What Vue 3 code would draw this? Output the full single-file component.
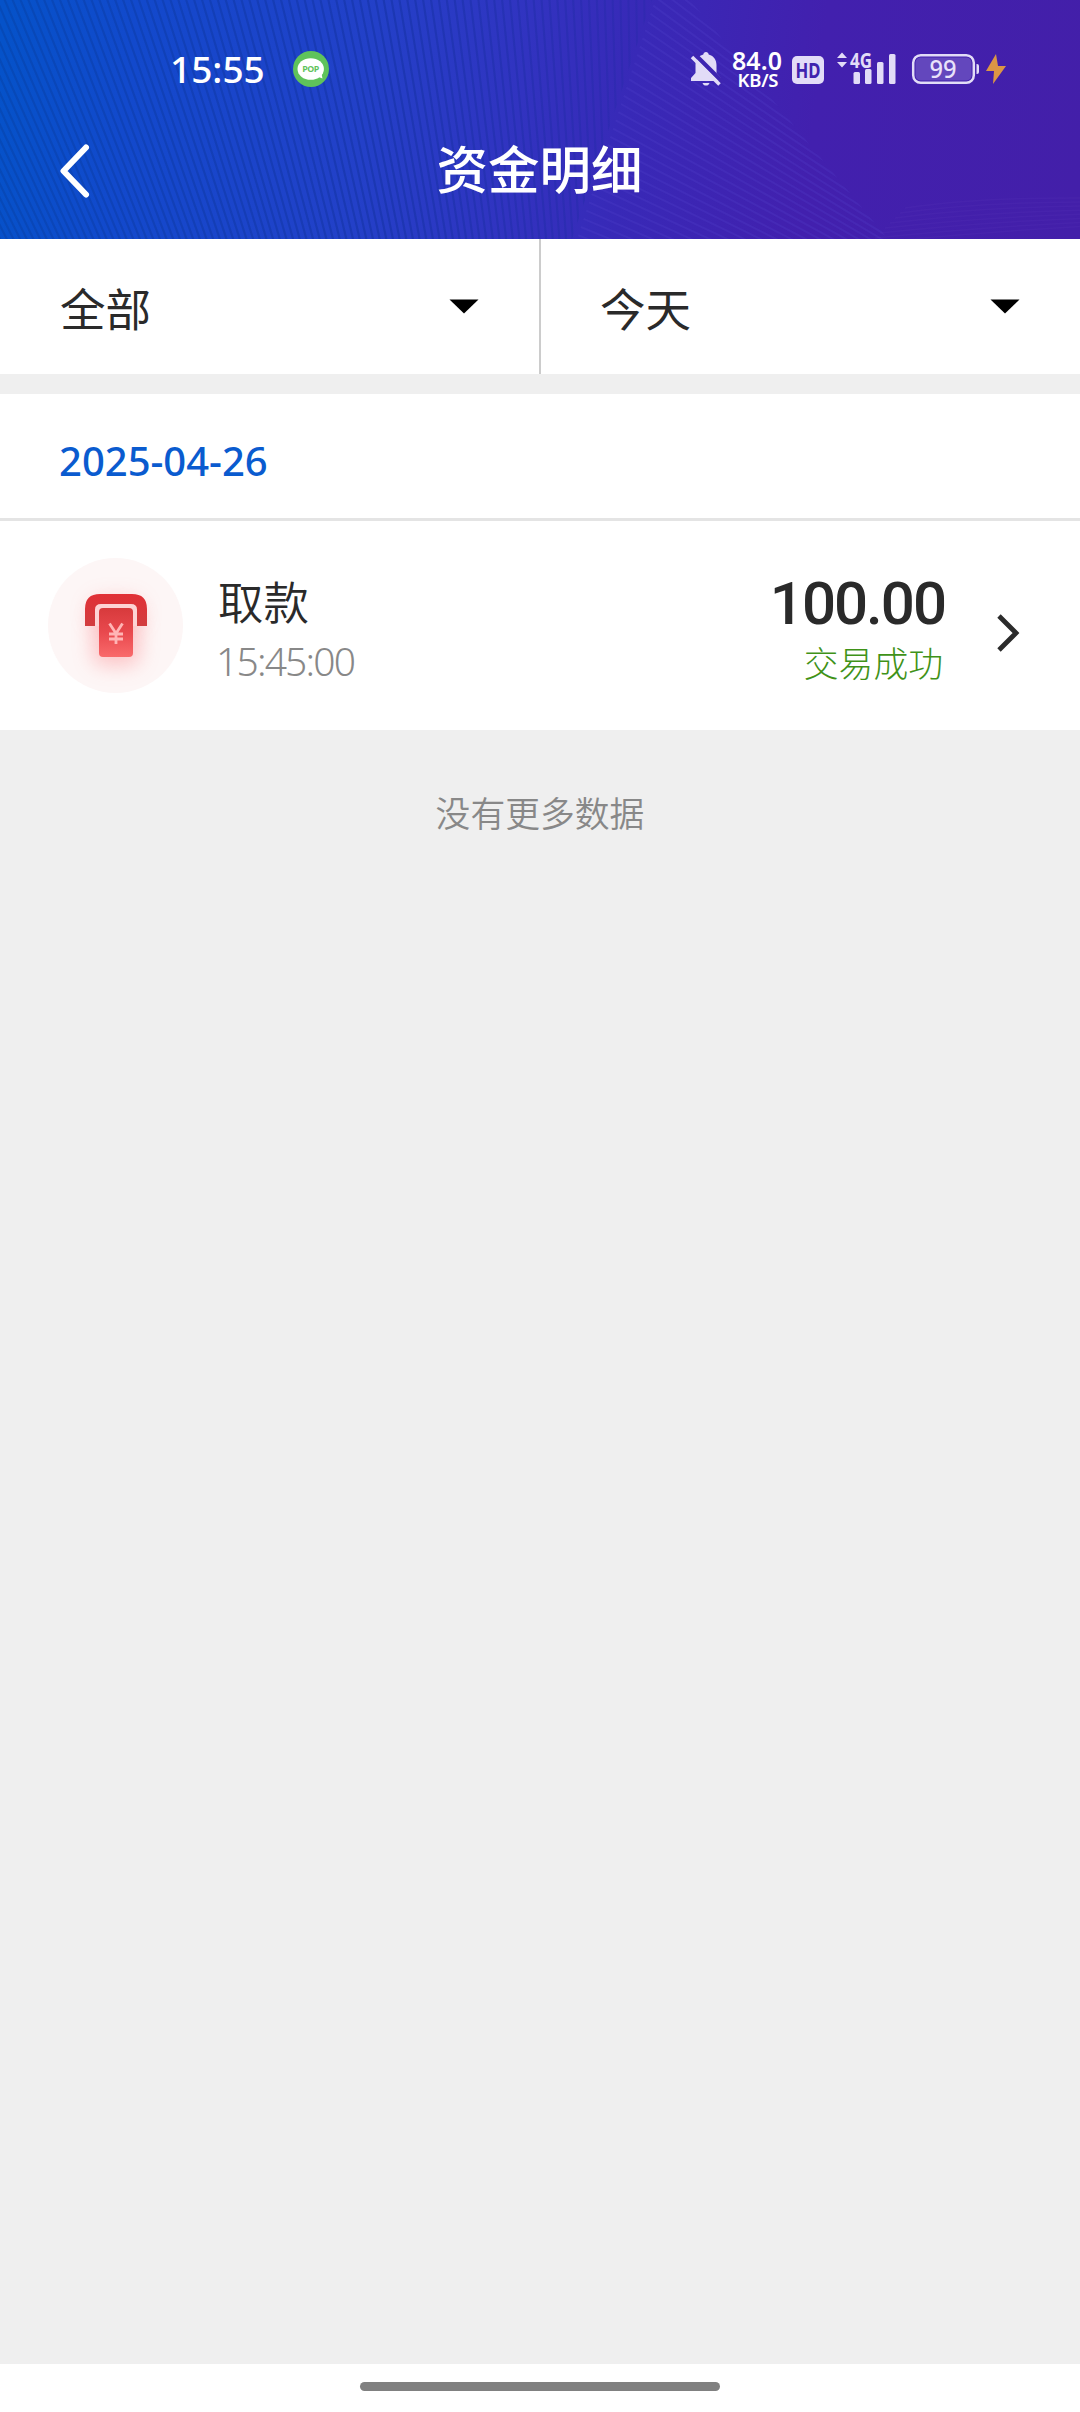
<script setup>
const range = (n) => Array.from({ length: n }, (_, i) => i)

// Steep strands that straighten towards the middle of the header
const strands = range(104).map((i) => {
  const x = -130 + i * 7.9
  const t = Math.min(1, Math.max(0, (x + 130) / 760))
  return { x1: x, x2: x + 120 * (1 - t) + 4 }
})

// Shallow strands fanning out from the fold
const folds = range(44).map((i) => {
  const y = -60 + i * 8.2
  return { x1: 655 - (y / 239) * 78, y1: y, x2: 925, y2: y + 215 - i * 2.1 }
})

const ripples = range(8).map((i) => `M${870 + i * 5} ${243 - i * 5} Q980 ${232 - i * 5} 1090 ${226 - i * 4}`)

const filters = ['全部', '今天']
const record = { name: '取款', time: '15:45:00', amount: '100.00', status: '交易成功' }
</script>

<template>
  <div class="page">
    <header class="header">
      <svg class="backdrop" width="1080" height="239" viewBox="0 0 1080 239">
        <defs>
          <linearGradient id="sky" gradientUnits="userSpaceOnUse" x1="0" y1="60" x2="1080" y2="190">
            <stop offset="0" stop-color="#0552c9" />
            <stop offset=".12" stop-color="#1249cc" />
            <stop offset=".34" stop-color="#2340c8" />
            <stop offset=".48" stop-color="#3133c0" />
            <stop offset=".58" stop-color="#3829b7" />
            <stop offset=".75" stop-color="#4220ae" />
            <stop offset="1" stop-color="#431fa9" />
          </linearGradient>
          <linearGradient id="fade" gradientUnits="userSpaceOnUse" x1="0" y1="0" x2="650" y2="0">
            <stop offset="0" stop-color="#073c9c" stop-opacity=".38" />
            <stop offset=".6" stop-color="#122f9d" stop-opacity=".48" />
            <stop offset="1" stop-color="#2428a8" stop-opacity=".32" />
          </linearGradient>
          <clipPath id="left"><path d="M0 0H652L572 239H0Z" /></clipPath>
          <clipPath id="mid"><path d="M652 0H690L888 239H572Z" /></clipPath>
        </defs>
        <rect width="1080" height="239" fill="url(#sky)" />
        <g clip-path="url(#left)" stroke="url(#fade)" stroke-width="2.2">
          <line v-for="(s, i) in strands" :key="i" :x1="s.x1" y1="-1" :x2="s.x2" y2="240" />
        </g>
        <g clip-path="url(#mid)" stroke="#5a4ad0" stroke-opacity=".2" stroke-width="2">
          <line v-for="(f, i) in folds" :key="i" :x1="f.x1" :y1="f.y1" :x2="f.x2" :y2="f.y2" />
        </g>
        <g fill="none" stroke="#5a35b8" stroke-opacity=".2" stroke-width="1.5">
          <path v-for="(d, i) in ripples" :key="i" :d="d" />
        </g>
      </svg>

      <div class="status">
        <span class="clock">15:55</span>
        <svg class="pop" width="36" height="36" viewBox="0 0 36 36">
          <circle cx="18" cy="18" r="18" fill="#5fc35b" />
          <ellipse cx="17.700" cy="18" rx="13.200" ry="10.800" fill="#fff" />
          <path d="M23 25 L29.500 27.500 L28 20Z" fill="#fff" />
          <text x="17.700" y="21.200" text-anchor="middle" font-size="8.800" font-weight="700" textLength="17" fill="#5fc35b">POP</text>
        </svg>
        <svg class="indicators" width="330" height="68" viewBox="688 35 330 68">
          <g fill="#e2dcf7">
            <path d="M706 52c1.500 0 2.500 1 2.700 2.500C714 56 716.500 60 716.500 65v8l4.500 5v3H691v-3l4.500-5v-8c0-5 2.500-9 7.800-10.500C703.500 53 704.500 52 706 52Z" />
            <path d="M702.500 83h7c-.5 1.700-1.800 2.600-3.500 2.600s-3-.9-3.500-2.600Z" />
            <path d="M694 53.500 L723 82.500" stroke="#3e25b1" stroke-width="4.500" />
            <path d="M692 57 L719.500 84.500" stroke="#e2dcf7" stroke-width="3.500" />
            <rect x="792" y="56" width="32" height="28" rx="5" />
            <path d="M842 52.500 847 58H837ZM842 67.500 847 62H837Z" />
            <rect x="853.500" y="72" width="6.500" height="12" rx="1.500" />
            <rect x="865" y="69" width="6.500" height="15" rx="1.500" />
            <rect x="877" y="62" width="6.500" height="22" rx="1.500" />
            <rect x="889" y="54" width="6.500" height="30" rx="1.500" />
            <path d="M976.500 64h.5a2 2 0 0 1 2 2v6a2 2 0 0 1-2 2h-.5Z" />
          </g>
          <rect x="913.200" y="55.200" width="60.600" height="27.600" rx="7.500" fill="none" stroke="#e2dcf7" stroke-width="2.500" />
          <rect x="915.500" y="57.500" width="56" height="23" rx="5" fill="#6347bd" />
          <path d="M996 54 986 71h8l-1 13 13-18h-8Z" fill="#dc9645" />
          <g class="tiny" text-anchor="middle">
            <text x="757" y="69.500" font-size="25" font-weight="600" textLength="50" fill="#fff">84.0</text>
            <text x="758" y="87" font-size="18.500" font-weight="600" textLength="41" fill="#fff">KB/S</text>
            <text x="808" y="78" font-size="22" font-weight="700" textLength="25" lengthAdjust="spacingAndGlyphs" fill="#3f23ae">HD</text>
            <text x="861" y="67.500" font-size="20.500" font-weight="700" textLength="22" lengthAdjust="spacingAndGlyphs" fill="#e2dcf7">4G</text>
            <text x="943" y="78" font-size="24.500" font-weight="500" textLength="27" lengthAdjust="spacingAndGlyphs" fill="#e8e2fa">99</text>
          </g>
        </svg>
      </div>

      <div class="nav">
        <svg class="back" width="34" height="56" viewBox="0 0 34 56">
          <path d="M28 4.500 5.500 28l22.500 23.500" fill="none" stroke="#fff" stroke-width="6" stroke-linecap="round" stroke-linejoin="round" />
        </svg>
        <h1>资金明细</h1>
      </div>
    </header>

    <div class="filters">
      <div v-for="f in filters" :key="f" class="filter">
        <span>{{ f }}</span>
        <svg width="30" height="15" viewBox="0 0 30 15"><path d="M.5.5h29L15 14.500Z" fill="#000" /></svg>
      </div>
    </div>

    <section class="list">
      <div class="date">2025-04-26</div>
      <div class="row">
        <svg class="badge" width="135" height="135" viewBox="0 0 135 135">
          <defs>
            <linearGradient id="hood" x1="0" y1="0" x2="0" y2="1">
              <stop offset="0" stop-color="#e13036" /><stop offset="1" stop-color="#d23d3f" />
            </linearGradient>
            <linearGradient id="note" x1="0" y1="0" x2="0" y2="1">
              <stop offset="0" stop-color="#d73a3c" /><stop offset=".5" stop-color="#e9494e" /><stop offset="1" stop-color="#f96a6b" />
            </linearGradient>
            <filter id="glow" x="-1" y="-1" width="3" height="3"><feGaussianBlur stdDeviation="10" /></filter>
          </defs>
          <circle cx="67.500" cy="67.500" r="67.500" fill="#fdf6f6" />
          <rect x="44" y="50" width="48" height="58" rx="12" fill="#fa777b" opacity=".38" filter="url(#glow)" />
          <rect x="40" y="38" width="56" height="34" rx="14" fill="#fa777b" opacity=".2" filter="url(#glow)" />
          <path d="M46 68V54q0-9 8-9H82q8 0 8 9V68Z" fill="#fdd3d4" />
          <path d="M37 68V51Q37 36 52 36H84Q99 36 99 51V68H89V51.500Q89 46 83 46H53Q47 46 47 51.500V68Z" fill="url(#hood)" />
          <rect x="51" y="50" width="34" height="49" rx="4" fill="url(#note)" />
          <path d="M61.500 65.500 68 75.500 74.500 65.500M61 76H75M61 81H75M68 75V86" fill="none" stroke="#ffb5b5" stroke-width="2.800" />
        </svg>
        <div class="info">
          <div class="name">{{ record.name }}</div>
          <div class="time">{{ record.time }}</div>
        </div>
        <div class="result">
          <div class="amount">{{ record.amount }}</div>
          <div class="state">{{ record.status }}</div>
        </div>
        <svg class="go" width="26" height="40" viewBox="0 0 26 40">
          <path d="M3 3 20 20 3 37" fill="none" stroke="#2b2b2b" stroke-width="4.800" />
        </svg>
      </div>
    </section>

    <p class="empty">没有更多数据</p>
    <footer class="gesture"><i></i></footer>
  </div>
</template>

<style>
body { margin: 0; }
</style>

<style scoped>
.page {
  display: flex;
  flex-direction: column;
  width: 1080px;
  height: 2412px;
  overflow: hidden;
  background: #efefef;
  color: #2a2a2a;
  font-family: "Noto Sans", "Noto Sans CJK SC", sans-serif;
}
.header {
  position: relative;
  flex: none;
  height: 239px;
  color: #fff;
}
.backdrop { position: absolute; inset: 0; }
.status {
  position: relative;
  display: flex;
  align-items: center;
  height: 138px;
}
.clock {
  width: 121px;
  margin-left: 170px;
  font-size: 37px;
  font-weight: 500;
  line-height: 50px;
}
.pop { margin-left: 2px; overflow: visible; }
.pop text { font-family: "Open Sans", sans-serif; }
.indicators { margin-left: 359px; }
.tiny { font-family: "Noto Sans", sans-serif; }
.nav {
  position: relative;
  display: flex;
  align-items: center;
  height: 66px;
}
.back { margin-left: 58px; }
h1 {
  flex: 1;
  margin: -8px 93px 0 0;
  text-align: center;
  font: 500 51.500px/66px "Noto Sans CJK SC", sans-serif;
}
.filters { display: flex; flex: none; height: 135px; background: #fff; }
.filter {
  display: flex;
  flex: none;
  width: 540px;
  align-items: center;
  justify-content: space-between;
  box-sizing: border-box;
  padding: 0 60px;
  font: 400 45.500px/66px "Noto Sans CJK SC", sans-serif;
}
.filter:first-child { border-right: 1px solid #ccc; }
.filter + .filter { border-left: 1px solid #ccc; padding-left: 59px; }
.list { flex: none; margin-top: 20px; background: #fff; }
.date {
  height: 124px;
  padding-left: 59px;
  border-bottom: 3px solid #e4e4e4;
  color: #0a5bcf;
  font-size: 40px;
  font-weight: 500;
  line-height: 134px;
}
.row { display: flex; height: 209px; }
.badge { margin: 37px 0 0 48px; flex: none; }
.info { margin: 46px 0 0 35px; flex: 1; }
.name { font: 350 45.500px/66px "Noto Sans CJK SC", sans-serif; }
.time {
  margin: 3px 0 0 -2px;
  color: #888;
  font-size: 39px;
  font-weight: 300;
  line-height: 50px;
  letter-spacing: -1.800px;
}
.result { margin-top: 50px; text-align: right; }
.amount { margin-right: -2px; font: 500 60px/66px Roboto, sans-serif; letter-spacing: -2px; }
.state { font: 300 34.800px/50px "Noto Sans CJK SC", sans-serif; color: #3f9218; }
.go { margin: 92px 58px 0 53px; }
.empty {
  flex: 1;
  margin: 57px 0 0;
  text-align: center;
  color: #888;
  font: 350 34.800px/50px "Noto Sans CJK SC", sans-serif;
}
.gesture { flex: none; height: 30px; padding-top: 18px; background: #fff; }
.gesture i { display: block; width: 360px; height: 9px; margin: 0 auto; border-radius: 5px; background: #808080; }
</style>
